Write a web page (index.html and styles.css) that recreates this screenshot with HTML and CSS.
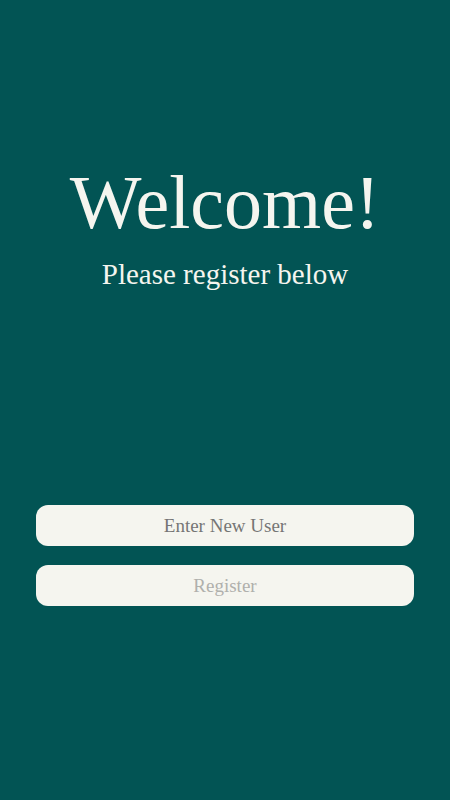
FILE: index.html
```html
<!DOCTYPE html>
<html>
<head>
<meta charset="utf-8">
<link rel="stylesheet" href="styles.css">
</head>
<body>
<main class="page">
  <header class="hero">
    <h1 class="title">Welcome!</h1>
    <p class="subtitle">Please register below</p>
  </header>
  <form class="form">
    <input class="field" type="text" placeholder="Enter New User">
    <button class="btn" type="button" disabled>Register</button>
  </form>
</main>
</body>
</html>
```
FILE: styles.css
```css
html, body {
  margin: 0;
  padding: 0;
  background: #025454;
}
body {
  font-family: "Liberation Serif", "Times New Roman", serif;
  color: #f5f5ef;
}
.page {
  width: 450px;
  height: 800px;
  display: flex;
  flex-direction: column;
  align-items: center;
  box-sizing: border-box;
  padding-top: 157px;
}
.hero {
  text-align: center;
}
.title {
  margin: 0;
  font-size: 76px;
  font-weight: normal;
  line-height: 90px;
}
.subtitle {
  margin: 10px 0 0;
  font-size: 29px;
  line-height: 34px;
}
.form {
  margin-top: 214px;
  width: 378px;
  display: flex;
  flex-direction: column;
  gap: 19px;
}
.field, .btn {
  box-sizing: border-box;
  width: 100%;
  height: 41px;
  border: none;
  border-radius: 12px;
  background: #f5f5ef;
  font-family: "Liberation Serif", "Times New Roman", serif;
  font-size: 19px;
  text-align: center;
  padding: 0;
  outline: none;
}
.field::placeholder {
  color: #757575;
}
.btn {
  color: #b0b0ac;
}
```
